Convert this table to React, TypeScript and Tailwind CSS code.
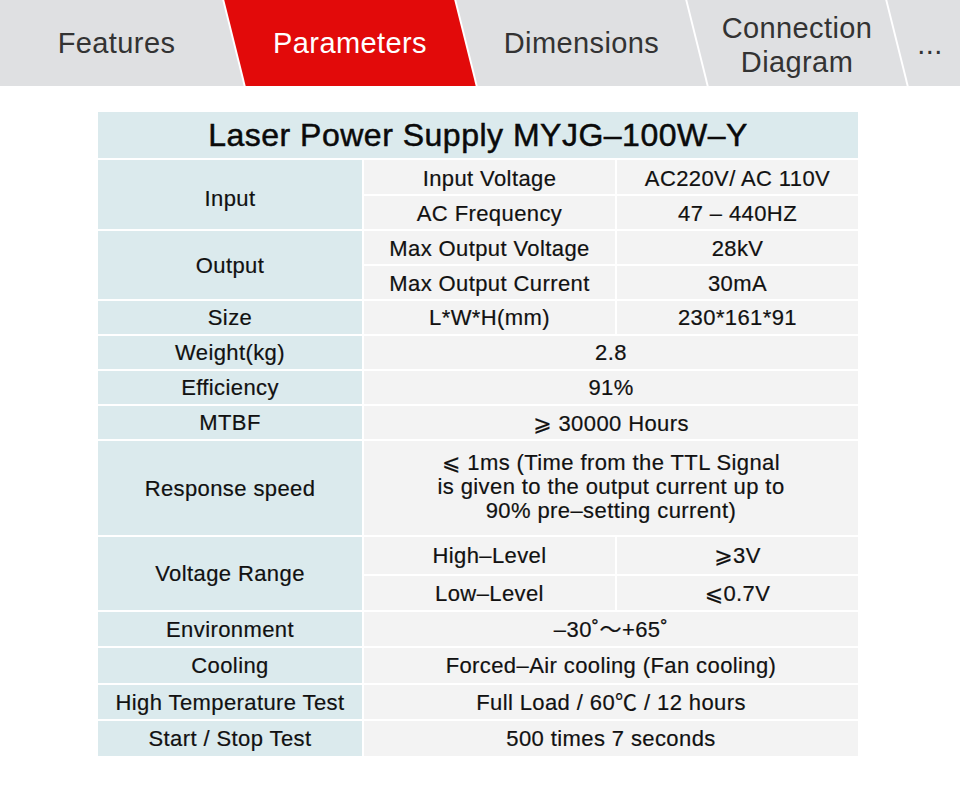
import React from 'react'

const font = { fontFamily: '"Liberation Sans", "Noto Sans CJK SC", "DejaVu Sans", sans-serif' }

function Tab({ label, active, className, inner }: { label: React.ReactNode; active?: boolean; className: string; inner?: string }) {
  return (
    <div
      className={`h-full skew-x-[14deg] flex items-center justify-center shrink-0 ${active ? 'bg-[#e20a0a]' : 'bg-[#dfe0e2]'} ${className}`}
    >
      <div
        className={`-skew-x-[14deg] w-full text-center text-[29px] leading-[34px] tracking-[0.4px] ${active ? 'text-white' : 'text-[#333333]'} ${inner ?? ''}`}
      >
        {label}
      </div>
    </div>
  )
}

function Head({ children, className = '' }: { children: React.ReactNode; className?: string }) {
  return (
    <div className={`bg-[#dbeaed] flex items-center justify-center text-center ${className}`}>{children}</div>
  )
}

function Cell({ children, className = '' }: { children: React.ReactNode; className?: string }) {
  return (
    <div className={`bg-[#f3f3f3] flex items-center justify-center text-center ${className}`}>{children}</div>
  )
}

export default function App() {
  return (
    <div className="w-[960px] h-[796px] bg-white" style={font}>
      {/* Tabs */}
      <div className="h-[86px] w-full overflow-hidden bg-white flex gap-[2px]">
        <Tab label="Features" className="w-[253px] -ml-[20px]" inner="pl-[20px]" />
        <Tab label="Parameters" active className="w-[230px]" />
        <Tab label="Dimensions" className="w-[229px]" />
        <Tab label={<>Connection<br />Diagram</>} className="w-[198px]" inner="pt-[4px]" />
        <Tab label="..." className="w-[80px]" inner="pr-[16px] pt-[2px] text-[24px]" />
      </div>

      {/* Spec table */}
      <div className="ml-[98px] mt-[26px] w-[760px] grid grid-cols-[264px_251px_241px] gap-[2px] grid-rows-[46px_34px_33px_33px_33px_33px_33px_33px_33px_94px_37px_34px_34px_35px_34px_35px] text-[22px] text-[#111111] tracking-[0.4px] [-webkit-text-stroke:0.2px]">
        <Head className="col-span-3 text-[32px] tracking-[0.5px] text-[#0a0a0a] [-webkit-text-stroke:0.5px]">Laser Power Supply MYJG–100W–Y</Head>

        <Head className="row-span-2 pt-[8px]">Input</Head>
        <Cell className="pt-[3px]">Input Voltage</Cell>
        <Cell className="pt-[3px]">AC220V/ AC 110V</Cell>
        <Cell className="pt-[2px]">AC Frequency</Cell>
        <Cell className="pt-[2px]">47 – 440HZ</Cell>

        <Head className="row-span-2">Output</Head>
        <Cell className="pt-[2px]">Max Output Voltage</Cell>
        <Cell className="pt-[2px]">28kV</Cell>
        <Cell className="pt-[2px]">Max Output Current</Cell>
        <Cell className="pt-[2px]">30mA</Cell>

        <Head>Size</Head>
        <Cell>L*W*H(mm)</Cell>
        <Cell>230*161*91</Cell>

        <Head>Weight(kg)</Head>
        <Cell className="col-span-2">2.8</Cell>

        <Head>Efficiency</Head>
        <Cell className="col-span-2">91%</Cell>

        <Head>MTBF</Head>
        <Cell className="col-span-2 pt-[2px]">⩾ 30000 Hours</Cell>

        <Head>Response speed</Head>
        <Cell className="col-span-2 leading-[24px] pb-[2px]">
          ⩽ 1ms (Time from the TTL Signal
          <br />
          is given to the output current up to
          <br />
          90% pre–setting current)
        </Cell>

        <Head className="row-span-2">Voltage Range</Head>
        <Cell>High–Level</Cell>
        <Cell>⩾3V</Cell>
        <Cell>Low–Level</Cell>
        <Cell>⩽0.7V</Cell>

        <Head>Environment</Head>
        <Cell className="col-span-2">–30˚～+65˚</Cell>

        <Head>Cooling</Head>
        <Cell className="col-span-2">Forced–Air cooling (Fan cooling)</Cell>

        <Head>High Temperature Test</Head>
        <Cell className="col-span-2">Full Load / 60℃ / 12 hours</Cell>

        <Head>Start / Stop Test</Head>
        <Cell className="col-span-2">500 times 7 seconds</Cell>
      </div>
    </div>
  )
}
